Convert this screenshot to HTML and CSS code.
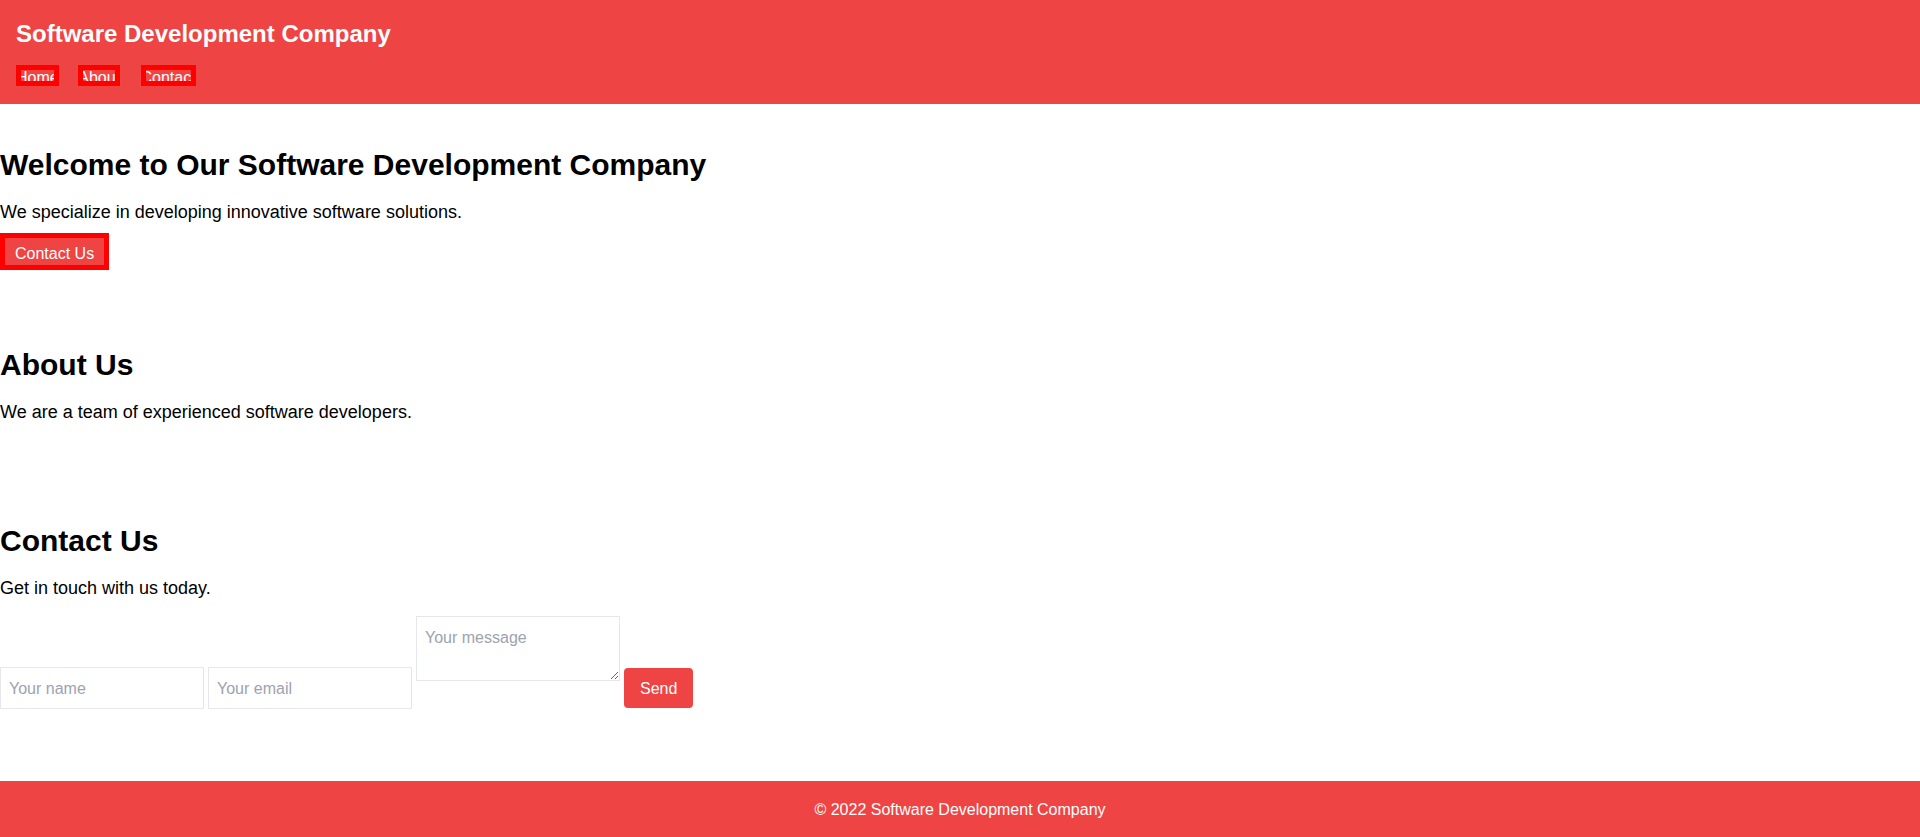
FILE: index.html
```html
<!DOCTYPE html>
<html lang="en">
<head>
<meta charset="utf-8">
<title>Software Development Company</title>
<link rel="stylesheet" href="styles.css">
</head>
<body>
<header class="site-header">
  <h1 class="brand">Software Development Company</h1>
  <nav class="nav">
    <a class="nav-link" href="#home">Home</a>
    <a class="nav-link" href="#about">About</a>
    <a class="nav-link" href="#contact">Contact</a>
  </nav>
</header>
<main class="main">
  <section class="section" id="home">
    <h2 class="section-title">Welcome to Our Software Development Company</h2>
    <p class="section-text">We specialize in developing innovative software solutions.</p>
    <div class="cta-line"><a class="cta" href="#contact">Contact Us</a></div>
  </section>
  <section class="section" id="about">
    <h2 class="section-title">About Us</h2>
    <p class="section-text">We are a team of experienced software developers.</p>
  </section>
  <section class="section" id="contact">
    <h2 class="section-title">Contact Us</h2>
    <p class="section-text">Get in touch with us today.</p>
    <form class="contact-form">
      <input class="field field-low" type="text" placeholder="Your name">
      <input class="field field-low" type="email" placeholder="Your email">
      <textarea class="field field-area" placeholder="Your message"></textarea>
      <button class="send" type="submit">Send</button>
    </form>
  </section>
</main>
<footer class="site-footer">
  <p class="footer-text">© 2022 Software Development Company</p>
</footer>
</body>
</html>
```
FILE: styles.css
```css
html, body {
  margin: 0;
  padding: 0;
}
body {
  font-family: "Liberation Sans", Arial, sans-serif;
  font-size: 16px;
  line-height: 24px;
  color: #000;
  background: #fff;
  min-height: 100vh;
  display: flex;
  flex-direction: column;
}
.site-header {
  background: #ef4444;
  color: #fff;
  padding: 16px 16px 14px;
}
.brand {
  margin: 0;
  padding-top: 2px;
  font-size: 24px;
  line-height: 32px;
  font-weight: 700;
}
.nav {
  margin-top: 16px;
  line-height: 24px;
}
.nav-link {
  color: #fff;
  text-decoration: none;
  padding: 4px 0 0;
  margin-right: 16px;
  outline: 5px solid #ff0000;
  outline-offset: -5px;
}
.main {
  flex: 1;
}
.section {
  padding: 40px 0;
}
.section-title {
  margin: 0 0 13px;
  padding-top: 3px;
  font-size: 30px;
  line-height: 36px;
  font-weight: 700;
}
.section-text {
  margin: 0 0 14px;
  padding-top: 2px;
  font-size: 18px;
  line-height: 28px;
}
.cta-line {
  box-sizing: border-box;
  height: 24px;
  padding-top: 2px;
  line-height: 24px;
}
.cta {
  background: #ef4444;
  color: #fff;
  text-decoration: none;
  padding: 12px 15px 8px;
  outline: 5px solid #ff0000;
  outline-offset: -5px;
}
.contact-form {
  display: flex;
  align-items: flex-start;
  gap: 4px;
}
.field {
  box-sizing: border-box;
  width: 204px;
  margin: 0;
  border: 1px solid #e5e7eb;
  border-radius: 0;
  padding: 9px 8px 7px;
  font-family: inherit;
  font-size: 16px;
  line-height: 24px;
  color: #111827;
  background: #fff;
}
.field::placeholder {
  color: #9ca3af;
  opacity: 1;
}
.field-low {
  height: 42px;
  margin-top: 51px;
}
.field-area {
  height: 65px;
}
.send {
  box-sizing: border-box;
  height: 40px;
  margin-top: 52px;
  padding: 2px 16px 0;
  border: 0;
  border-radius: 4px;
  background: #ef4444;
  color: #fff;
  font-family: inherit;
  font-size: 16px;
  line-height: 24px;
}
.site-footer {
  background: #ef4444;
  color: #fff;
  padding: 17px 16px 15px;
  text-align: center;
}
.footer-text {
  margin: 0;
}
```
